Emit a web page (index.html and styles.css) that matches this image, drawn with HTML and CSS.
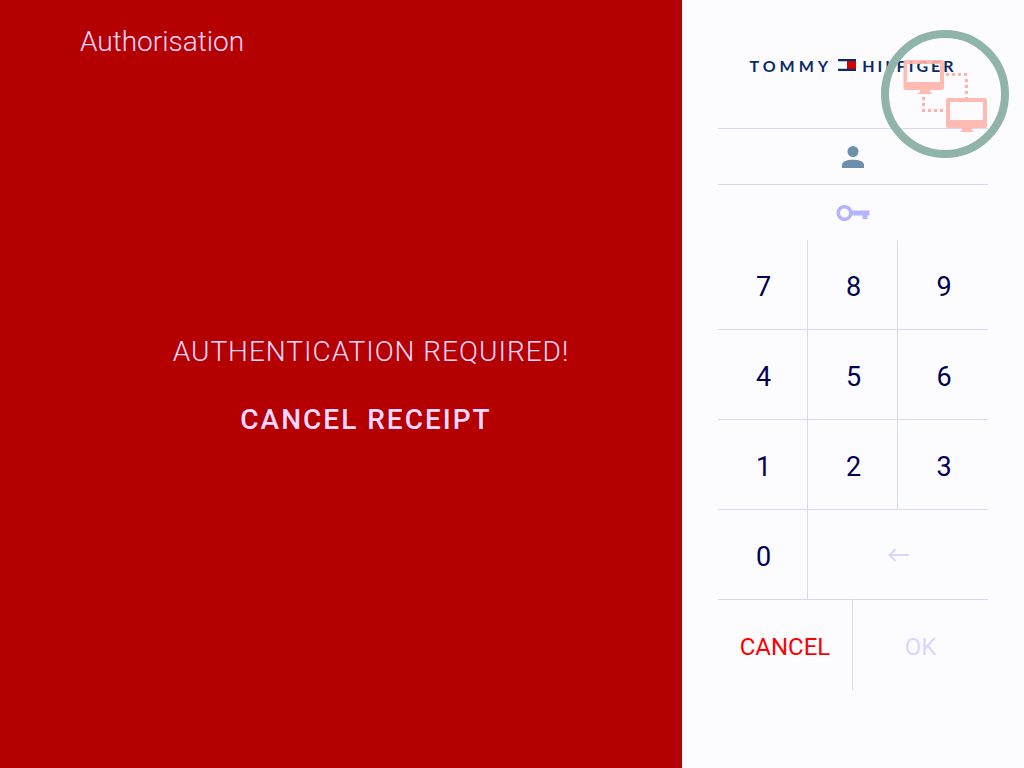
FILE: index.html
```html
<!DOCTYPE html>
<html lang="en">
<head>
<meta charset="utf-8">
<meta name="viewport" content="width=device-width, initial-scale=1">
<title>Authorisation</title>
<link rel="stylesheet" href="styles.css">
</head>
<body>
<main class="message-panel">
  <h1 class="title">Authorisation</h1>
  <div class="message">
    <p class="notice">AUTHENTICATION REQUIRED!</p>
    <p class="action">CANCEL RECEIPT</p>
  </div>
</main>
<aside class="login-panel">
  <header class="brand">
    <span class="brand-word wide">TOMMY</span>
    <svg class="flag" viewBox="0 0 18 12" aria-hidden="true">
      <path fill="#fff" d="M0 2h9v8H0z"/>
      <path fill="#d90000" d="M9 2h9v8H9z"/>
      <path fill="#0a2b66" d="M0 0h18v2.300H0zM0 9.700h18V12H0z"/>
    </svg>
    <span class="brand-word">HILFIGER</span>
  </header>
  <button class="field" type="button" aria-label="User">
    <svg class="user-icon" viewBox="0 0 22 22" aria-hidden="true"><circle cx="11" cy="5.500" r="5.500"/><path d="M0 22v-3C0 15.600 5 13.800 11 13.800S22 15.600 22 19v3z"/></svg>
  </button>
  <button class="field" type="button" aria-label="Password">
    <svg class="key-icon" viewBox="0 0 34 16" aria-hidden="true"><circle cx="8.500" cy="8" r="6.300"/><path d="M15 5.500h18.500v5h-2V14H26.500v-3.500H15z"/></svg>
  </button>
  <div class="keypad">
    <button class="key" type="button">7</button>
    <button class="key" type="button">8</button>
    <button class="key last" type="button">9</button>
    <button class="key" type="button">4</button>
    <button class="key" type="button">5</button>
    <button class="key last" type="button">6</button>
    <button class="key" type="button">1</button>
    <button class="key" type="button">2</button>
    <button class="key last" type="button">3</button>
    <button class="key" type="button">0</button>
    <button class="key back last" type="button" aria-label="Backspace">
      <svg class="arrow" viewBox="0 0 22 14" aria-hidden="true"><path d="M21 7H2M7.500 1 1.500 7l6 6"/></svg>
    </button>
  </div>
  <div class="actions">
    <button class="cancel" type="button">CANCEL</button>
    <button class="ok" type="button">OK</button>
  </div>
  <svg class="network-badge" viewBox="0 0 128 128" role="img" aria-label="Network connection">
    <circle class="ring" cx="64" cy="64" r="60"/>
    <g class="screen">
      <path fill-rule="evenodd" d="M24 30h37q2 0 2 2v26q0 2-2 2H49v2l3 2H36l3-2v-2H24.500q-2 0-2-2V32q0-2 1.500-2zM26 34v18h33V34z"/>
      <path fill-rule="evenodd" d="M67 68h37q2 0 2 2v26q0 2-2 2H91v2l2 2H79l2-2v-2H67q-2 0-2-2V70q0-2 2-2zM69 72v18h33V72z"/>
    </g>
    <path class="link-line" d="M65 44.500h22M85.500 49v19M42.500 67v11M41 80.500h22"/>
  </svg>
</aside>
</body>
</html>
```
FILE: styles.css
```css
* {
  box-sizing: border-box;
}

body {
  display: grid;
  grid-template-columns: 1fr 342px;
  min-height: 100vh;
  margin: 0;
  background: #fcfcff;
  font-family: Roboto, "Liberation Sans", sans-serif;
}

.message-panel {
  display: flex;
  flex-direction: column;
  background: #b40000;
  color: #ffd8ff;
}

.title {
  margin: 0;
  padding: 23px 80px;
  font-size: 28px;
  font-weight: 300;
  line-height: 38px;
}

.message {
  padding: 249px 0 0 60px;
  font-size: 28px;
  line-height: 38px;
  text-align: center;
}

.notice,
.action {
  margin: 0 0 30px;
  font-weight: 300;
  letter-spacing: 1px;
}

.action {
  padding-right: 10px;
  font-weight: 500;
  letter-spacing: 2px;
}

.login-panel {
  position: relative;
  padding: 0 36px;
}

button {
  padding: 0;
  border: 0;
  background: none;
  color: inherit;
  font: inherit;
}

.brand {
  display: flex;
  align-items: center;
  justify-content: center;
  gap: 6px;
  height: 128px;
  padding-top: 2px;
  color: #0a2b66;
  font-family: Lato, sans-serif;
  font-size: 16px;
  font-weight: 700;
  letter-spacing: 3px;
}

.wide {
  letter-spacing: 4px;
}

.flag {
  width: 18px;
  height: 12px;
}

.field {
  display: flex;
  align-items: center;
  justify-content: center;
  width: 100%;
  height: 56px;
  border-top: 1px solid #d8d8ff;
}

.user-icon {
  width: 22px;
  height: 22px;
  fill: #6c90ab;
}

.key-icon {
  width: 34px;
  height: 16px;
  fill: #b4b4ff;
}

.key-icon circle {
  fill: none;
  stroke: #b4b4ff;
  stroke-width: 3.500;
}

.keypad {
  display: grid;
  grid-template-columns: repeat(3, 1fr);
  grid-auto-rows: 90px;
  color: #000050;
  font-size: 27px;
}

.key {
  padding: 4px 0 0 2px;
  border-right: 1px solid #d8d8ff;
  border-bottom: 1px solid #d8d8ff;
}

.last {
  border-right: 0;
}

.back {
  display: flex;
  grid-column: span 2;
  align-items: center;
  justify-content: center;
  padding-top: 0;
}

.arrow {
  width: 22px;
  height: 14px;
  fill: none;
  stroke: #d8d8ff;
  stroke-width: 2;
}

.actions {
  display: grid;
  grid-template-columns: 1fr 1fr;
  height: 90px;
  font-size: 24px;
}

.cancel,
.ok {
  padding-top: 4px;
}

.cancel {
  border-right: 1px solid #d8d8ff;
  color: #f00;
}

.ok {
  color: #d8d8ff;
}

.network-badge {
  position: absolute;
  top: 30px;
  right: 15px;
  width: 128px;
  height: 128px;
  pointer-events: none;
}

.ring {
  fill: none;
  stroke: #90b4aa;
  stroke-width: 8;
}

.screen {
  fill: #ffb2aa;
  fill-opacity: 0.900;
}

.link-line {
  fill: none;
  stroke: #ffb2aa;
  stroke-width: 3;
  stroke-dasharray: 3 3;
}
```
